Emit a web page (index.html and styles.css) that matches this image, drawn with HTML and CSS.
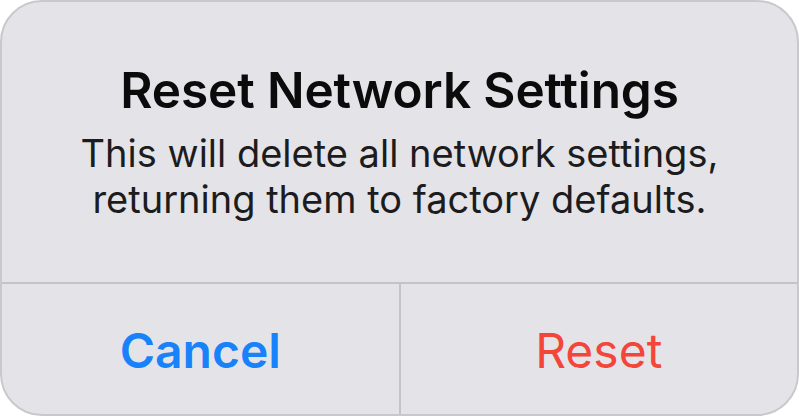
FILE: index.html
```html
<!DOCTYPE html>
<html lang="en">
<head>
    <meta charset="UTF-8">
    <meta name="viewport" content="width=device-width, initial-scale=1.0">
    <title>Reset Network Settings</title>
    <link rel="stylesheet" href="styles.css">
</head>
<body>
    <div class="alert">
        <div class="alert-body">
            <h1>Reset Network Settings</h1>
            <p class="message">This will delete all network settings,<br>returning them to factory defaults.</p>
        </div>
        <div class="alert-actions">
            <button class="action cancel">Cancel</button>
            <button class="action destructive">Reset</button>
        </div>
    </div>
</body>
</html>
```
FILE: styles.css
```css
* {
    margin: 0;
    padding: 0;
    box-sizing: border-box;
}

body {
    font-family: Inter, 'Liberation Sans', sans-serif;
    background: white;
    width: 799px;
    height: 416px;
    overflow: hidden;
}

.alert {
    width: 799px;
    height: 416px;
    background: #e4e4e8;
    border: 2px solid #c9c9cd;
    border-radius: 42px;
    display: flex;
    flex-direction: column;
    overflow: hidden;
}

.alert-body {
    height: 282px;
    border-bottom: 2px solid #c4c4c8;
    text-align: center;
    padding-top: 60px;
}

h1 {
    color: #0b0b0c;
    font-size: 49.5px;
    font-weight: 600;
    line-height: 56px;
    letter-spacing: -0.1px;
}

.message {
    color: #1c1c1e;
    font-size: 38px;
    line-height: 46px;
    margin-top: 12px;
}

.alert-actions {
    flex: 1;
    display: flex;
}

.action {
    flex: 1;
    background: none;
    border: none;
    font-family: inherit;
    font-size: 48px;
    padding-top: 2px;
}

.cancel {
    color: #1882fa;
    font-weight: 600;
    border-right: 2px solid #c4c4c8;
}

.destructive {
    color: #f4453a;
    font-weight: 400;
}
```
